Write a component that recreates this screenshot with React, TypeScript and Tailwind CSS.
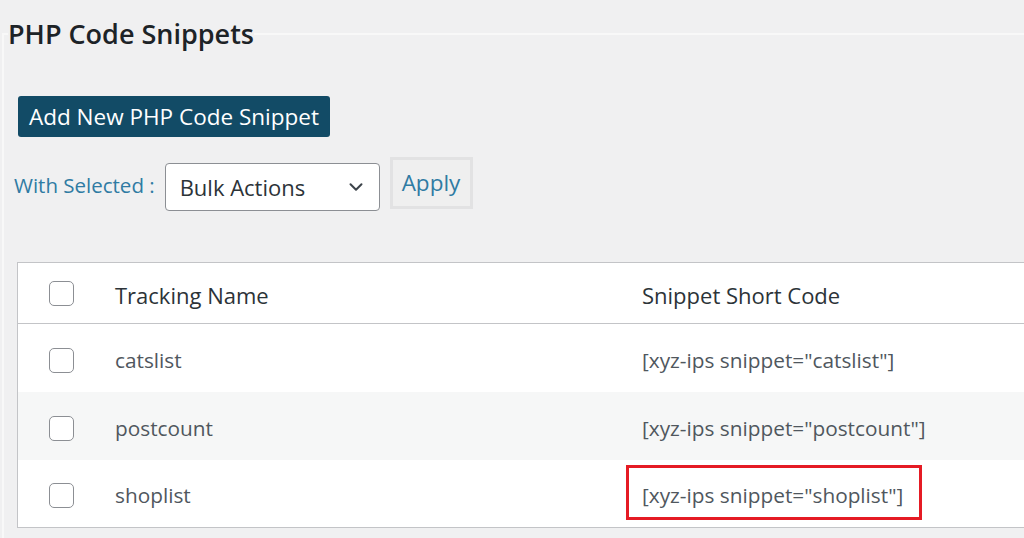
import React from "react";
import { ChevronDown } from "lucide-react";

const rows = [
  { name: "catslist", bg: "bg-white", h: "h-[68px]", mark: false },
  { name: "postcount", bg: "bg-[#f6f7f7]", h: "h-[68px]", mark: false },
  { name: "shoplist", bg: "bg-white", h: "h-[67px]", mark: true },
];

function Box() {
  return <span className="block w-[25px] h-[25px] rounded-[5px] border border-[#8c8f94] bg-white" />;
}

export default function App() {
  return (
    <div
      className="w-[1024px] h-[538px] overflow-hidden bg-[#f0f0f1] text-[#50575e]"
      style={{ fontFamily: '"Open Sans", "Noto Sans", sans-serif' }}
    >
      <fieldset className="mt-[17px] ml-[2px] border-t-2 border-l-2 border-[#f8f8f8] h-[600px]">
        <legend className="ml-[4px] text-[27px] leading-[34px] font-semibold text-[#1d2327]">
          PHP Code Snippets
        </legend>

        <button className="mt-[45px] ml-[14px] h-[41px] px-[11px] rounded-[3px] bg-[#124b66] text-white text-[22.5px] leading-[41px]">
          Add New PHP Code Snippet
        </button>

        <div className="mt-[20px] ml-[10px] flex items-start">
          <span className="mt-[13px] text-[20.5px] leading-[30px] text-[#2f7ba3]">With Selected :</span>
          <div className="ml-[10px] mt-[6px] w-[215px] h-[48px] rounded-[4px] border border-[#8c8f94] bg-white flex items-center justify-between pl-[14px] pr-[12px]">
            <span className="text-[22px] text-[#2c3338]">Bulk Actions</span>
            <ChevronDown size={22} strokeWidth={2.2} className="text-[#3c434a]" />
          </div>
          <button className="ml-[10px] w-[83px] h-[52px] border-[3px] border-[#e2e2e3] bg-[#efefef] text-[22.5px] text-[#2f7ba3] text-left pl-[9px] pb-[1px]">
            Apply
          </button>
        </div>

        <div className="mt-[51px] ml-[13px] w-[1030px] border border-[#c3c4c7] bg-white">
          <div className="flex items-center h-[61px] border-b border-[#c3c4c7] text-[22px] text-[#2c3338]">
            <div className="w-[97px] pl-[31px]"><Box /></div>
            <div className="w-[527px] pt-[4px]">Tracking Name</div>
            <div className="pt-[4px]">Snippet Short Code</div>
          </div>
          {rows.map((r) => (
            <div key={r.name} className={`relative flex items-center ${r.h} text-[20.8px] ${r.bg}`}>
              <div className="w-[97px] pl-[31px] pt-[4px]"><Box /></div>
              <div className="w-[527px] pt-[5px]">{r.name}</div>
              <div className="pt-[5px]">[xyz-ips snippet="{r.name}"]</div>
              {r.mark && (
                <span className="absolute left-[608px] top-[5px] w-[296px] h-[55px] border-[3px] border-[#e51b24]" />
              )}
            </div>
          ))}
        </div>
      </fieldset>
    </div>
  );
}
